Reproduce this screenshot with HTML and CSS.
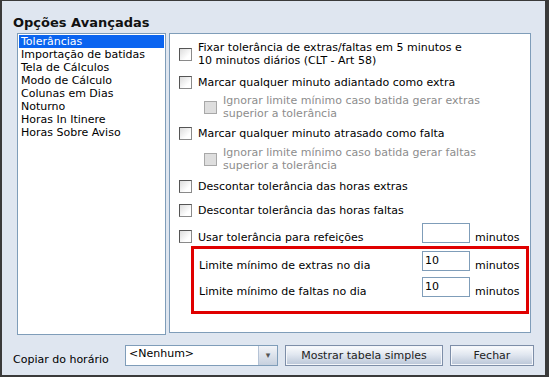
FILE: index.html
```html
<!DOCTYPE html>
<html lang="pt">

<head>
    <meta charset="UTF-8">
    <title>Opções Avançadas</title>
    <link rel="stylesheet" href="styles.css">
</head>

<body>

    <div class="window">
        <h1 class="title">Opções Avançadas</h1>

        <div class="main">
            <ul class="menu">
                <li class="selected">Tolerâncias</li>
                <li>Importação de batidas</li>
                <li>Tela de Cálculos</li>
                <li>Modo de Cálculo</li>
                <li>Colunas em Dias</li>
                <li>Noturno</li>
                <li>Horas In Itinere</li>
                <li>Horas Sobre Aviso</li>
            </ul>

            <div class="panel">
                <div class="row r1">
                    <span class="check"></span>
                    <span>Fixar tolerância de extras/faltas em 5 minutos e<br>10 minutos diários (CLT - Art 58)</span>
                </div>
                <div class="row r2">
                    <span class="check"></span>
                    <span>Marcar qualquer minuto adiantado como extra</span>
                </div>
                <div class="row sub r3">
                    <span class="check disabled"></span>
                    <span>Ignorar limite mínimo caso batida gerar extras<br>superior a tolerância</span>
                </div>
                <div class="row r4">
                    <span class="check"></span>
                    <span>Marcar qualquer minuto atrasado como falta</span>
                </div>
                <div class="row sub r5">
                    <span class="check disabled"></span>
                    <span>Ignorar limite mínimo caso batida gerar faltas<br>superior a tolerância</span>
                </div>
                <div class="row r6">
                    <span class="check"></span>
                    <span>Descontar tolerância das horas extras</span>
                </div>
                <div class="row r7">
                    <span class="check"></span>
                    <span>Descontar tolerância das horas faltas</span>
                </div>
                <div class="row field r8">
                    <span class="check"></span>
                    <span class="label">Usar tolerância para refeições</span>
                    <span class="box"></span>
                    <span class="unit">minutos</span>
                </div>

                <div class="highlight">
                    <div class="field">
                        <span class="label">Limite mínimo de extras no dia</span>
                        <span class="box">10</span>
                        <span class="unit">minutos</span>
                    </div>
                    <div class="field">
                        <span class="label">Limite mínimo de faltas no dia</span>
                        <span class="box">10</span>
                        <span class="unit">minutos</span>
                    </div>
                </div>
            </div>
        </div>

        <div class="footer">
            <span class="copy-label">Copiar do horário</span>
            <div class="combo">
                <span class="combo-text">&lt;Nenhum&gt;</span>
                <span class="combo-btn">&#9662;</span>
            </div>
            <button class="btn wide">Mostrar tabela simples</button>
            <button class="btn">Fechar</button>
        </div>
    </div>

</body>

</html>
```

FILE: styles.css
```css
body {
    margin: 0;
    font-family: "DejaVu Sans", Verdana, sans-serif;
    font-size: 11px;
    color: #000;
    background: #dfe6f0;
}

.window {
    width: 549px;
    height: 377px;
    box-sizing: border-box;
    background-color: #dfe6f0;
    border: 2px solid #3a3a3a;
    border-top-width: 1px;
    border-right-width: 4px;
    padding: 11px 0 0 11px;
}

.title {
    margin: 0;
    font-size: 13px;
    font-weight: bold;
    line-height: 21px;
    color: #111;
}

.main {
    display: flex;
    gap: 3px;
    margin-left: 4px;
}

.menu {
    list-style: none;
    margin: 0;
    padding: 1px;
    width: 145px;
    height: 298px;
    background: #fff;
    border: 1px solid #7f9db9;
}

.menu li {
    line-height: 13px;
    padding-left: 2px;
}

.menu li.selected {
    background-color: #0a64f0;
    color: #fff;
}

.panel {
    width: 351px;
    height: 298px;
    background: #fff;
    border: 1px solid #7f9db9;
    padding: 0 0 0 9px;
    display: flex;
    flex-direction: column;
}

.row {
    display: flex;
    align-items: center;
    gap: 6px;
    line-height: 13px;
}

.r1 { margin-top: 7px; }
.r2 { margin-top: 9px; }
.r3 { margin-top: 5px; }
.r4 { margin-top: 7px; }
.r5 { margin-top: 6px; }
.r6 { margin-top: 8px; }
.r7 { margin-top: 11px; }
.r8 { margin-top: 6px; }

.row.sub {
    padding-left: 25px;
    color: #8d8d8d;
}

.check {
    flex: none;
    width: 11px;
    height: 11px;
    border: 1px solid #8a8a8a;
    border-top-color: #555;
    border-left-color: #555;
    background: linear-gradient(135deg, #dcdcdc, #fff 70%);
}

.check.disabled {
    background: #dedede;
    border-color: #a8a8a8;
}

.field {
    display: flex;
    align-items: flex-end;
}

.field .label,
.field .unit {
    line-height: 10px;
}

.field .label {
    width: 223px;
}

.row.field {
    gap: 0;
}

.row.field .label {
    width: 224px;
}

.row.field .check {
    align-self: flex-end;
    margin: 0 6px 0 0;
}

.box {
    box-sizing: border-box;
    width: 48px;
    height: 20px;
    border: 1px solid #7f9db9;
    background: #fff;
    padding: 2px 0 0 2px;
    line-height: 13px;
}

.unit {
    margin-left: 5px;
}

.highlight {
    margin: 3px 0 0 12px;
    width: 327px;
    height: 60px;
    border: 3px solid #e00000;
    padding: 2px 0 0 5px;
    display: flex;
    flex-direction: column;
    gap: 6px;
}

.footer {
    display: flex;
    align-items: center;
    margin-top: 10px;
}

.copy-label {
    width: 112px;
    padding-top: 8px;
}

.combo {
    display: flex;
    width: 151px;
    height: 19px;
    border: 1px solid #7f9db9;
    background: #fff;
}

.combo-text {
    flex: 1;
    padding: 1px 0 0 3px;
}

.combo-btn {
    width: 18px;
    border-left: 1px solid #b5c3d6;
    background: linear-gradient(#f2f4f8, #c6d0de);
    color: #555;
    font-size: 9px;
    text-align: center;
    line-height: 19px;
}

.btn {
    margin-left: 7px;
    width: 84px;
    height: 21px;
    padding: 0;
    font-family: inherit;
    font-size: 11px;
    color: #222;
    border: 1px solid #7d8ea8;
    box-shadow: inset 0 0 0 1px #f4f6fa;
    background: linear-gradient(#fbfcfd, #e1e7f0 45%, #b9c5d7);
}

.btn.wide {
    width: 158px;
}
```
